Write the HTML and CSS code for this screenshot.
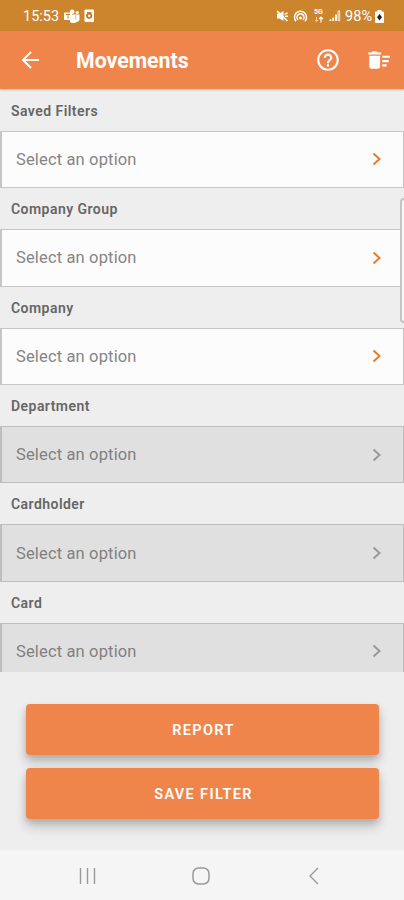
FILE: index.html
```html
<!DOCTYPE html>
<html lang="en">
<head>
<meta charset="utf-8">
<title>Movements</title>
<link rel="stylesheet" href="styles.css">
</head>
<body>
<div class="status">
  <span class="time">15:53</span>
  <svg class="teams" width="16" height="14" viewBox="0 0 16 14" fill="#fff"><circle cx="8.2" cy="2.8" r="2.3"/><circle cx="13.2" cy="3.6" r="1.6"/><path d="M6 5.500h9.500v4a3 3 0 0 1-3 3.200 4 4 0 0 1-6.500 0z"/><rect x="0" y="3.500" width="8" height="7.500" rx="1"/><path d="M2 5.400h4M4 5.400v4" stroke="#cd852d" stroke-width="1.100"/><path d="M11.700 6.500v4" stroke="#dfae72" stroke-width=".8"/></svg>
  <svg class="outlook" width="11" height="14" viewBox="0 0 11 14"><rect x=".5" y=".5" width="9.500" height="12.500" rx="1" fill="#fff"/><circle cx="5.200" cy="6.800" r="2.200" fill="none" stroke="#b97220" stroke-width="1.700"/><path d="M3 3.500h4.500" stroke="#cd852d"/></svg>
  <span class="spacer"></span>
  <svg class="mute" width="13" height="12" viewBox="0 0 13 12" fill="none" stroke="#fff" stroke-width="1.600"><path d="M1 3.500h2.500L7.500 1v10L3.500 8.500H1z" fill="#fff" stroke="none"/><path d="M1 1l10.500 10M8.500 4c1 0 2-.5 3-1M9 6.300h3"/></svg>
  <svg class="hotspot" width="15" height="13" viewBox="0 0 15 13" fill="none" stroke="#fff" stroke-width="1.500"><path d="M3 11.200A6 6 0 1 1 12 11.200M5 9.800A3.500 3.500 0 1 1 10 9.800"/><circle cx="7.500" cy="8" r="1.500" fill="#fff" stroke="none"/></svg>
  <span class="net"><span>5G</span><svg width="10" height="7" viewBox="0 0 10 7" fill="none" stroke="#fff"><path d="M2.500 1v4.500M1 4l1.500 1.500L4 4" opacity=".55"/><path d="M7 6.500V1M5 3l2-2 2 2" stroke-width="1.200"/></svg></span>
  <svg class="signal" width="12" height="12" viewBox="0 0 12 12" fill="#fff"><path d="M.5 9.500h1.800V11H.5zM3.300 7.500h1.800V11H3.300zM6.100 4.500h1.800V11H6.100z"/><path d="M9 .8h1.700v10H9z" fill="#fff" fill-opacity=".35" stroke="#fff" stroke-width=".7"/></svg>
  <span class="pct">98%</span>
  <svg class="batt" width="9" height="13" viewBox="0 0 9 13"><path d="M2.500 0h4v1.500H8a1 1 0 0 1 1 1V12a1 1 0 0 1-1 1H1a1 1 0 0 1-1-1V2.500a1 1 0 0 1 1-1h1.500z" fill="#fff"/><path d="M4.500 4L7 7.200 4.500 10.500 2 7.200z" fill="#222"/></svg>
</div>
<header class="bar">
  <svg class="back" width="24" height="24" viewBox="0 0 24 24" fill="none" stroke="#fff" stroke-width="2"><path d="M20 12H5M12 4l-8 8 8 8"/></svg>
  <h1>Movements</h1>
  <svg class="help" width="26" height="26" viewBox="0 0 24 24" fill="#fff"><path d="M11 18h2v-2h-2v2zm1-16C6.480 2 2 6.480 2 12s4.480 10 10 10 10-4.480 10-10S17.520 2 12 2zm0 18c-4.410 0-8-3.590-8-8s3.590-8 8-8 8 3.590 8 8-3.590 8-8 8zm0-14c-2.210 0-4 1.790-4 4h2c0-1.100.9-2 2-2s2 .9 2 2c0 2-3 1.750-3 5h2c0-2.250 3-2.500 3-5 0-2.210-1.790-4-4-4z"/></svg>
  <svg class="sweep" width="26" height="26" viewBox="0 0 24 24" fill="#fff"><path d="M15 16h4v2h-4zm0-8h7v2h-7zm0 4h6v2h-6zM3 18c0 1.100.9 2 2 2h6c1.100 0 2-.9 2-2V8H3v10zM14 5h-3l-1-1H6L5 5H2v2h12z"/></svg>
</header>
<main class="form">
  <label>Saved Filters</label>
  <div class="field"><span>Select an option</span><svg width="10" height="14" viewBox="0 0 10 14"><path d="M1.500 1.500L7.500 7l-6 5.500"/></svg></div>
  <label>Company Group</label>
  <div class="field"><span>Select an option</span><svg width="10" height="14" viewBox="0 0 10 14"><path d="M1.500 1.500L7.500 7l-6 5.500"/></svg></div>
  <label>Company</label>
  <div class="field"><span>Select an option</span><svg width="10" height="14" viewBox="0 0 10 14"><path d="M1.500 1.500L7.500 7l-6 5.500"/></svg></div>
  <label>Department</label>
  <div class="field off"><span>Select an option</span><svg width="10" height="14" viewBox="0 0 10 14"><path d="M1.500 1.500L7.500 7l-6 5.500"/></svg></div>
  <label>Cardholder</label>
  <div class="field off"><span>Select an option</span><svg width="10" height="14" viewBox="0 0 10 14"><path d="M1.500 1.500L7.500 7l-6 5.500"/></svg></div>
  <label>Card</label>
  <div class="field off"><span>Select an option</span><svg width="10" height="14" viewBox="0 0 10 14"><path d="M1.500 1.500L7.500 7l-6 5.500"/></svg></div>
  <div class="edge-panel"></div>
</main>
<section class="actions">
  <button>REPORT</button>
  <button>SAVE FILTER</button>
</section>
<nav class="sysnav">
  <svg width="18" height="18" viewBox="0 0 18 18" fill="none" stroke="#999" stroke-width="1.400"><path d="M1.500 1v16M8.500 1v16M15.500 1v16"/></svg>
  <svg class="home" width="20" height="20" viewBox="0 0 20 20" fill="none" stroke="#999" stroke-width="1.500"><rect x="2" y="2" width="16" height="16" rx="5.500"/></svg>
  <svg width="12" height="18" viewBox="0 0 12 18" fill="none" stroke="#999" stroke-width="1.400"><path d="M10 1L2 9l8 8"/></svg>
</nav>
</body>
</html>
```
FILE: styles.css
```css
* { box-sizing: border-box; }
body {
  margin: 0;
  width: 404px;
  height: 900px;
  overflow: hidden;
  display: flex;
  flex-direction: column;
  background: #eee;
  font-family: Roboto, "Liberation Sans", sans-serif;
}
svg { display: block; flex: none; }
.status {
  height: 31px;
  flex: none;
  display: flex;
  align-items: center;
  padding: 1px 20px 0 23px;
  background: #cd852d;
  color: #fff;
  font-size: 14.5px;
}
.time { width: 41px; }
.outlook { margin-left: 4px; }
.spacer { flex: 1; }
.hotspot { margin-left: 4px; }
.net {
  width: 11px;
  margin-left: 6px;
  font-size: 7px;
  line-height: 7px;
  font-weight: 700;
}
.signal { margin-left: 4px; }
.pct { margin-left: 4px; }
.batt { margin-left: 3px; }
.bar {
  height: 58px;
  flex: none;
  display: flex;
  align-items: center;
  padding: 0 12px 0 19px;
  background: #f0854b;
  color: #fff;
  position: relative;
  box-shadow: 0 1px 2px rgba(0, 0, 0, .2);
}
h1 {
  flex: 1;
  margin: 1px 0 0 33px;
  font-size: 21.3px;
  font-weight: 700;
}
.sweep { margin-left: 25px; }
.form {
  height: 583px;
  flex: none;
  overflow: hidden;
  position: relative;
  padding-top: .8px;
}
label {
  display: flex;
  align-items: center;
  height: 41px;
  padding: 1px 0 0 11px;
  color: #666;
  font-size: 14px;
  font-weight: 600;
  letter-spacing: .45px;
}
.field {
  height: 57.4px;
  display: flex;
  align-items: center;
  justify-content: space-between;
  padding: 0 21px 0 14px;
  border: 1px solid #c6c6c6;
  border-left-width: 2px;
  background: #fcfcfc;
  color: #858585;
  font-size: 16.5px;
  letter-spacing: .15px;
}
.field svg { fill: none; stroke: #e8792b; stroke-width: 2; }
.off { background: #e0e0e0; border-color: #bdbdbd; color: #808080; }
.off svg { stroke: #999; }
.edge-panel {
  position: absolute;
  top: 109px;
  right: -4px;
  width: 8px;
  height: 125px;
  border: 2px solid #c4c4c4;
  border-radius: 4px;
  background: #f8f8f8;
}
.actions {
  flex: 1;
  padding: 32px 25px 0 26px;
  display: flex;
  flex-direction: column;
  gap: 13px;
}
button {
  height: 51px;
  padding: 1px 0 0 2px;
  border: 0;
  border-radius: 4px;
  background: #f0854b;
  color: #fff;
  font-family: inherit;
  font-size: 14.5px;
  font-weight: 600;
  letter-spacing: 1.35px;
  box-shadow: 0 8px 12px rgba(0, 0, 0, .18), 0 3px 6px rgba(0, 0, 0, .14);
}
.sysnav {
  height: 50px;
  flex: none;
  display: flex;
  align-items: center;
  justify-content: space-between;
  padding: 1px 84px 0 79px;
  background: #f5f5f5;
}
.home { margin-right: 4px; }
```
